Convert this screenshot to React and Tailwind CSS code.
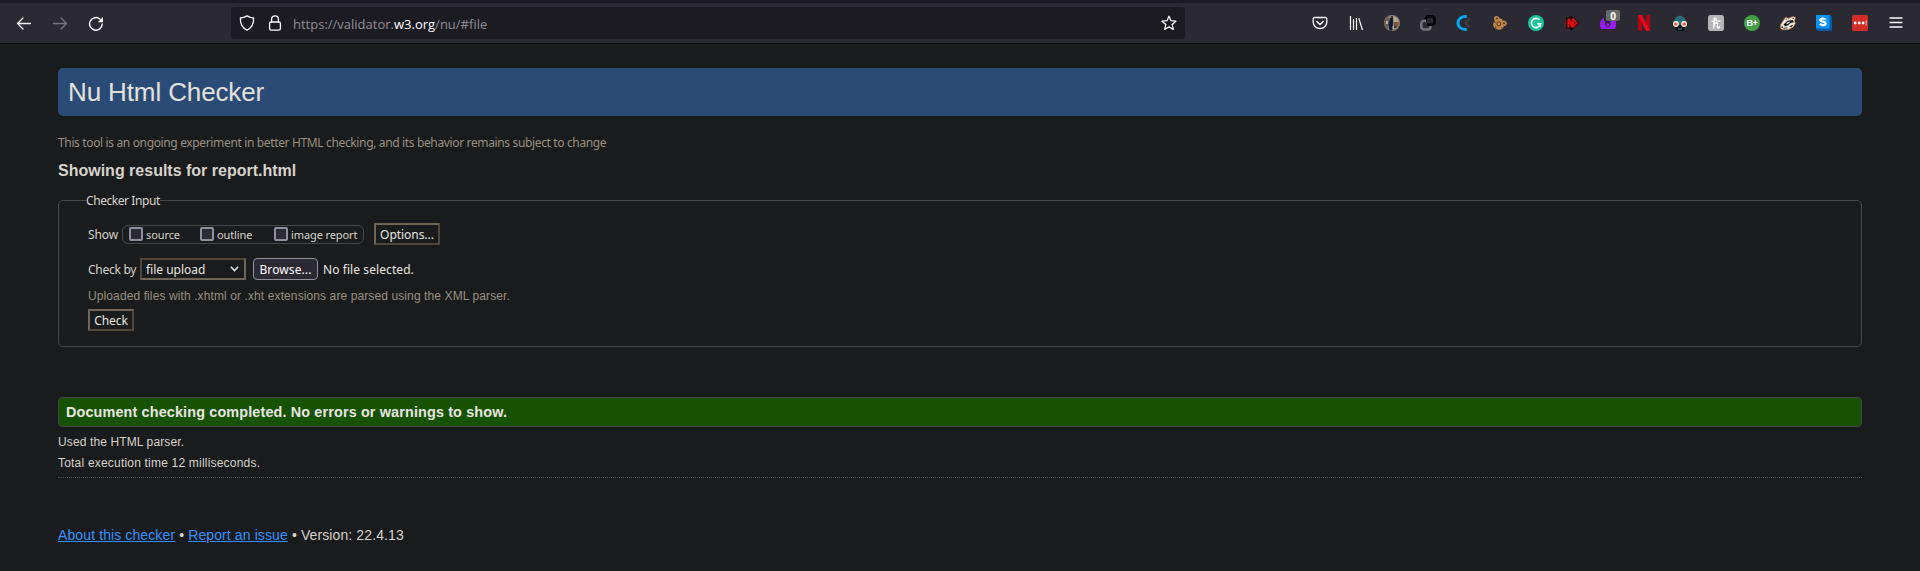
const Icon = ({ children, className = "" }) => (
  <svg width="16" height="16" viewBox="0 0 16 16" fill="none" className={"shrink-0 " + className}>
    {children}
  </svg>
);

const line = { stroke: "currentColor", strokeWidth: 1.3, strokeLinecap: "round", strokeLinejoin: "round" };

function Extensions() {
  return (
    <div className="ml-auto flex items-center gap-5 pr-4">
      <Icon>
        <path d="M2.500 2.500h11a1.300 1.300 0 0 1 1.300 1.300v3.400a6.800 6.300 0 0 1-13.600 0V3.800a1.300 1.300 0 0 1 1.300-1.300z" {...line} />
        <path d="M4.800 6.500L8 9.500l3.200-3" {...line} strokeWidth="1.400" />
      </Icon>
      <Icon>
        <path d="M2.500 1v14M5.500 4v11M8.500 3v12M10.800 3.200L14.500 15" stroke="currentColor" strokeWidth="1.200" />
      </Icon>
      <Icon>
        <circle cx="8" cy="8" r="8" fill="#8d8275" />
        <path d="M1 4.500A8 8 0 0 1 5 .6L5.500 8 4 15A8 8 0 0 1 1 4.500z" fill="#6b635a" />
        <path d="M9 1l4 2 1.500 4H10z" fill="#b3a58d" />
        <path d="M6 3h3v5l-.5 7.500H5.500L4.500 9z" fill="#17193a" />
        <path d="M10 7h5l-1 4h-4z" fill="#8a5234" />
        <path d="M2 6h2v3H2zM8.500 11h2v3h-2z" fill="#b9ac97" />
        <path d="M7 1h2v2H7zM10 11h3l-1 2h-2z" fill="#3a3433" />
      </Icon>
      <Icon>
        <path d="M7 9.700h4.500A2.700 2.700 0 0 0 14.500 7V4.200a2.700 2.700 0 0 0-2.700-2.700H8.500a2.700 2.700 0 0 0-2.700 2.700V7" stroke="#050507" strokeWidth="2.800" />
        <path d="M6 5.800H4a2.700 2.700 0 0 0-2.700 2.700v3.300A2.700 2.700 0 0 0 4 14.500h3.700a2.700 2.700 0 0 0 2.700-2.700v-.8" stroke="#74747a" strokeWidth="2.500" />
      </Icon>
      <Icon>
        <path d="M10.800 1.700C5.500 1 2 4 2 8s3.500 7 8.800 6.300" stroke="#06a4f5" strokeWidth="3" />
        <path d="M13.500 3.500L9.500 8l4 4.500" stroke="#3c3d43" strokeWidth="2.200" />
      </Icon>
      <Icon>
        <path d="M3.500 1.200c2-.8 3.800.5 4 2.300 1.500-.2 2.800.5 3.500 2 2.500-.2 4 1.500 3.900 3.300-.2 1.700-1.700 2.300-3 2.300-.4 2.500-2.700 4-5.400 3.600-3-.3-5.500-2.500-5.300-5.400.1-1.500.8-2.500 1.800-3.300C1.500 4.300 1.600 2 3.500 1.200z" fill="#be8447" />
        <circle cx="5" cy="3.500" r=".9" fill="#4a3428" />
        <circle cx="6.800" cy="8.800" r="2" fill="#be8447" stroke="#4a3428" strokeWidth=".9" />
        <circle cx="12" cy="8.300" r="1" fill="#4a3428" />
        <path d="M3 11.500h1.300v1.300H3zM9 12.500h1.200v1H9zM2.500 7h1v1h-1z" fill="#4a3428" />
      </Icon>
      <Icon>
        <circle cx="8" cy="8" r="8" fill="#15c39a" />
        <path d="M11.600 5A4.600 4.600 0 1 0 12.600 8.700H9.200" stroke="#fff" strokeWidth="1.600" />
        <path d="M10.300 10.300l2.300-1.600v3" stroke="#fff" strokeWidth="1.200" />
      </Icon>
      <Icon>
        <path d="M7.500.5L15.500 8l-8 7.500-2-2H2v-11h3.500z" fill="#18060a" />
        <path d="M9 2.700L14.300 8 9 13.300z" fill="#d00a12" />
        <path d="M10.200 6.500L11.700 8l-1.500 1.500z" fill="#18060a" />
        <path d="M3.500 12.500v-9h2l2.200 4v-4h1.800v9H7.700l-2.200-4v4z" fill="#e50b14" />
        <path d="M.8 6h2M.3 8.500h2.500M.8 11h2" stroke="#8c0a10" strokeWidth="1.200" />
      </Icon>
      <div className="relative h-4 w-4">
        <Icon>
          <path d="M4 2.500C1 4 0 7 0 9.500 0 12.500 1 14 2 14h12c1.500 0 2-2 2-4.500V6H4z" fill="#9a1fee" />
          <path d="M5 5.500h5.500v3a2.700 2.700 0 0 1-5.500 0z" fill="#35214a" />
          <circle cx="7.800" cy="9.800" r="2" fill="#9a1fee" stroke="#35214a" strokeWidth="1" />
        </Icon>
        <span className="absolute -top-[5px] left-[6px] flex h-[11px] w-[14px] items-center justify-center rounded-[2px] bg-[#6a6a6a] font-['Noto_Sans',sans-serif] text-[10px] leading-none font-bold text-white">0</span>
      </div>
      <Icon>
        <path d="M2 0h4v15.700L2 16zM10 0h4v16l-4-.3z" fill="#b1060f" />
        <path d="M2 0h4l8 16-4.200-.4z" fill="#e50920" />
      </Icon>
      <Icon>
        <path d="M2.300 7.500C2.300 3 5 .8 8 .8s5.700 2.200 5.700 6.700v2H2.300z" fill="#2c6c7c" />
        <path d="M3 10h10l-1 5.700H4z" fill="#0b1218" />
        <path d="M6 13.500h4v1.300H6z" fill="#3b6d7a" />
        <circle cx="3.900" cy="9" r="2.300" fill="#f0522f" stroke="#f7ece4" strokeWidth="1.400" />
        <circle cx="12.100" cy="9" r="2.300" fill="#f0522f" stroke="#f7ece4" strokeWidth="1.400" />
      </Icon>
      <Icon>
        <rect width="16" height="16" rx="2.500" fill="#b5b5b7" />
        <path d="M6.300 3.200L5.800 13M4 6.200c2 .3 4.500-.7 4.300-2.300C8.200 2.800 6.700 2.800 6.300 4M5.900 10.500c.7-1.800 1.800-2.900 2.900-2.700 1.600.3.200 2.700.5 4 .3 1.300 1.500 1.200 2.500.3M8.500 6c1.400.3 2.700.2 3.500-.2" stroke="#fff" strokeWidth="1.300" strokeLinecap="round" />
      </Icon>
      <div className="flex h-4 w-4 items-center justify-center rounded-full bg-[#43a047] text-[9px] leading-none font-bold tracking-[-0.300px] text-white">B+</div>
      <Icon>
        <path d="M1 9l3-4.500L6 2l2 1.500L13 1.500l2.500 1-1 3 .8 3-2 3.500-4.500 2.500L4 14.800 1 14l-.7-2.500z" fill="#efe6dc" stroke="#c8743a" strokeWidth=".6" />
        <path d="M3.500 9.500L8 5.500l5-.3 1 2-3 .5-3 2.500-3 1z" fill="#15130f" />
        <path d="M6 8.500l3-2 1.300.5-2.800 2z" fill="#fff" />
        <path d="M5 4.500l1.500-1.300L7 4.500zM12 2.800l2 .2-.8 1.500zM1 11.800l1.800-.5.5 1.500-1.500.3zM9 11.500l4.500-2-2 2.800z" fill="#2a221c" />
        <path d="M3.500 13.300l4-.5" stroke="#2a221c" strokeWidth=".9" />
      </Icon>
      <Icon>
        <path d="M0 0h14l2 2v14H2l-2-2z" fill="#0659a6" />
        <path d="M0 0h13.700v13.500H0z" fill="#0a94fb" />
        <path d="M9.800 4.600C8.800 3.200 4.300 3 4.300 5c0 2.300 5.300 1 5.300 3.500 0 2-4.300 2-5.700.3" stroke="#fff" strokeWidth="2.200" />
      </Icon>
      <Icon>
        <rect width="16" height="16" rx="1.500" fill="#d32d27" />
        <circle cx="3.200" cy="8" r="1.400" fill="#fff" />
        <circle cx="7.200" cy="8" r="1.400" fill="#fff" />
        <circle cx="11.100" cy="8" r="1.400" fill="#fff" />
        <path d="M14.200 5.300v5.400" stroke="#f3c3c1" strokeWidth=".9" />
      </Icon>
      <Icon>
        <path d="M2 3h12M2 7.500h12M2 12h12" {...line} />
      </Icon>
    </div>
  );
}

function Toolbar() {
  return (
    <div className="flex h-[44px] flex-col border-t-3 border-b border-t-[#1c1b22] border-b-[#0c0c0d] bg-[#2b2a33]">
      <div className="flex h-[40px] items-center text-[#fbfbfe]">
        <div className="flex w-[231px] items-center gap-5 pl-4">
          <Icon><path d="M14.500 8.500H1.500M7 3L1.500 8.500 7 14" {...line} /></Icon>
          <Icon className="text-[#76757c]"><path d="M1.500 8.500h13M9 3l5.500 5.500L9 14" {...line} /></Icon>
          <Icon>
            <path d="M14.200 9A6.300 6.300 0 1 1 12 4.100" {...line} strokeWidth="1.400" />
            <path d="M15 2v5.200H9.800z" fill="currentColor" />
          </Icon>
        </div>
        <div className="flex h-[32px] w-[954px] items-center rounded bg-[#1c1b22] pl-2">
          <Icon><path d="M8 .9c2 1.300 4.300 2 6.600 2.100.3 5-1.600 9.600-6.600 12.200C3 12.600 1.100 8 1.400 3 3.700 2.900 6 2.200 8 .9z" {...line} /></Icon>
          <Icon className="ml-3">
            <rect x="2.600" y="7" width="10.800" height="8.200" rx="1.600" {...line} />
            <path d="M4.600 7V4.200a3.400 3.400 0 0 1 6.800 0V7" {...line} />
          </Icon>
          <span className="ml-[10px] pt-[3px] font-['Open_Sans',sans-serif] text-[13px] whitespace-nowrap text-[#8f8e95]">
            https://validator.<span className="text-[#fbfbfe]">w3.org</span>/nu/#file
          </span>
          <Icon className="mr-2 ml-auto"><path d="M8 1.200l2 4.500 4.900.5-3.700 3.300 1.100 4.900L8 11.900l-4.300 2.500 1.100-4.900L1.100 6.200 6 5.700z" {...line} /></Icon>
        </div>
        <Extensions />
      </div>
    </div>
  );
}

function Check({ label, className = "" }) {
  return (
    <label className={"flex items-center gap-[3px] " + className}>
      <span className="h-[14px] w-[14px] shrink-0 rounded-[2px] border-2 border-[#8f8f9d] bg-[#2b2a33]" />
      <span className="pt-[2px] text-[11px] tracking-[-0.100px]">{label}</span>
    </label>
  );
}

function Button({ children, className }) {
  return (
    <button className={"flex h-[22px] items-center justify-center border-2 border-t-[#6f6658] border-r-[#4f463c] border-b-[#4f463c] border-l-[#6f6658] pt-[2px] text-[12px] tracking-[-0.050px] text-[#e8e6e3] " + className}>
      {children}
    </button>
  );
}

function CheckerInput() {
  return (
    <fieldset className="mt-[10px] h-[156px] rounded-[5px] border border-[#45494b] pl-[27px] font-['Noto_Sans',sans-serif] text-[12px] whitespace-nowrap text-[#d6d3cd]">
      <legend className="h-[19px] leading-[19px] tracking-[-0.430px]">Checker Input</legend>
      <div className="-ml-px flex flex-col pl-[3px]">
        <div className="mt-[13px] flex h-[22px] items-center">
          <span className="w-[34px] pt-[2px] tracking-[-0.100px]">Show</span>
          <div className="flex h-[19px] w-[242px] items-center rounded-[6px] border border-[#45494b] pl-[6px]">
            <Check label="source" className="w-[71px]" />
            <Check label="outline" className="w-[74px]" />
            <Check label="image report" />
          </div>
          <Button className="ml-[10px] w-[66px]">Options...</Button>
        </div>
        <div className="mt-[13px] flex h-[22px] items-center text-[#e8e6e3]">
          <span className="w-[52px] pt-[2px] tracking-[-0.280px] text-[#d6d3cd]">Check by</span>
          <div className="flex h-[22px] w-[106px] items-center justify-between border-2 border-t-[#4f463c] border-r-[#6f6658] border-b-[#6f6658] border-l-[#4f463c] pr-[5px] pl-1">
            <span className="pt-[2px]">file upload</span>
            <svg width="9" height="6" viewBox="0 0 9 6" fill="none"><path d="M.8.800L4.500 4.600 8.200.8" stroke="#e8e6e3" strokeWidth="1.500" /></svg>
          </div>
          <button className="ml-[7px] flex h-[22px] w-[65px] items-center justify-center rounded border border-[#8f8f9d] bg-[#2b2a33] pt-[2px] tracking-[0.100px] text-[#fbfbfe]">Browse...</button>
          <span className="ml-[5px] pt-[2px] tracking-[0.080px]">No file selected.</span>
        </div>
        <p className="mt-[8px] h-4 font-['Liberation_Sans',sans-serif] leading-4 tracking-[0.105px] text-[#989083]">
          Uploaded files with .xhtml or .xht extensions are parsed using the XML parser.
        </p>
        <Button className="mt-[5px] w-[46px]">Check</Button>
      </div>
    </fieldset>
  );
}

export default function App() {
  return (
    <div className="h-[571px] overflow-hidden bg-[#1a1b1c] font-['Liberation_Sans',sans-serif] whitespace-nowrap text-[#d6d3cd]">
      <Toolbar />
      <main className="mx-[58px] flex flex-col pt-6">
        <h1 className="flex h-12 items-center rounded-[5px] bg-[#2b4b77] pl-[10px] text-[26px] tracking-[-0.120px] text-[#e4e1db]">Nu Html Checker</h1>
        <p className="mt-[18px] h-[18px] font-['Noto_Sans',sans-serif] text-[12px] leading-[18px] tracking-[-0.355px] text-[#989083]">
          This tool is an ongoing experiment in better HTML checking, and its behavior remains subject to change
        </p>
        <h2 className="mt-[9px] h-5 text-[16px] leading-5 font-bold">Showing results for report.html</h2>
        <CheckerInput />
        <p className="mt-[50px] flex h-[30px] items-center rounded-[4px] border border-[#3f4548] bg-[#165201] pt-px pl-[7px] text-[14.400px] font-bold tracking-[0.140px] text-[#e8e6e3]">
          Document checking completed. No errors or warnings to show.
        </p>
        <p className="mt-[6px] h-[18px] text-[12px] leading-[18px] tracking-[0.120px]">Used the HTML parser.</p>
        <p className="mt-[3px] h-[18px] text-[12px] leading-[18px] tracking-[0.200px]">Total execution time 12 milliseconds.</p>
        <div className="mt-[5px] border-t border-dotted border-[#4a4e50]" />
        <footer className="mt-[47px] text-[14px] leading-5 tracking-[0.110px]">
          <a className="text-[#3391ff] underline underline-offset-1" href="#about">About this checker</a> •{" "}
          <a className="text-[#3391ff] underline underline-offset-1" href="#issue">Report an issue</a> • Version: 22.4.13
        </footer>
      </main>
    </div>
  );
}
